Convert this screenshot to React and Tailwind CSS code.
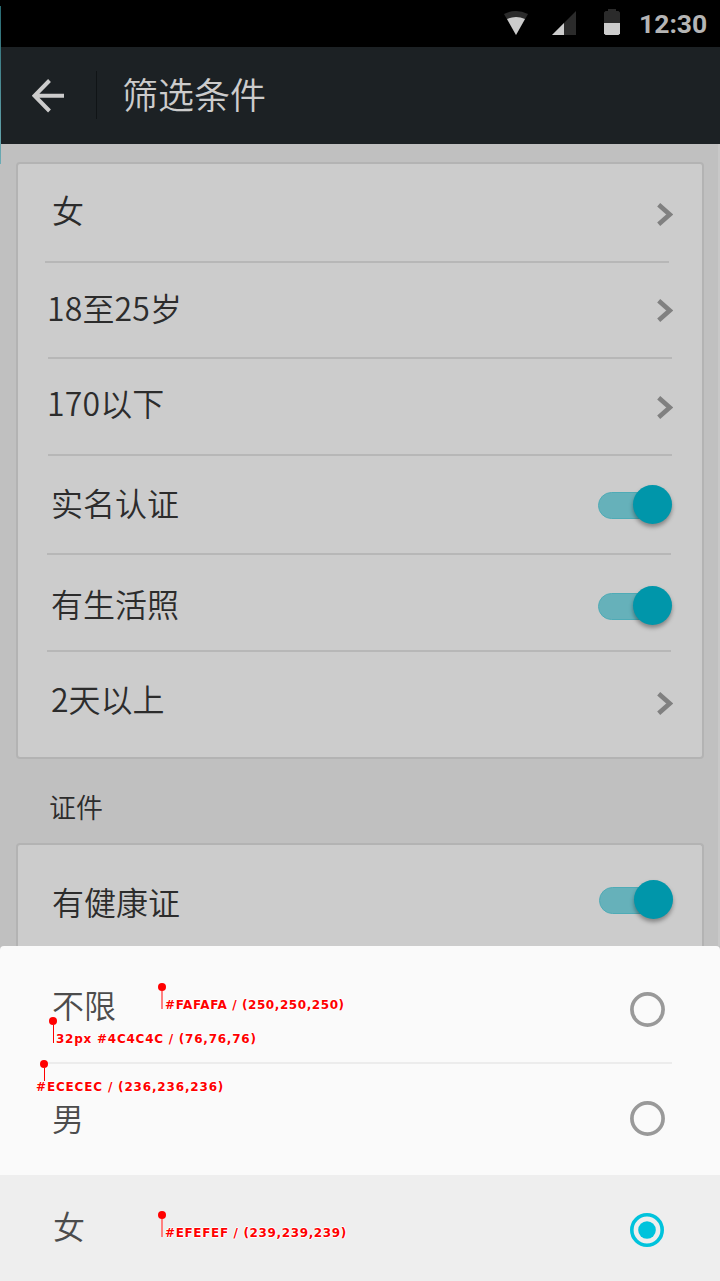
import React from "react";

function Chevron({ className }) {
  return (
    <svg className={`h-[23px] w-4 shrink-0 ${className}`} viewBox="0 0 16 23" fill="none">
      <path d="M1.7 1.7 L12.7 11.5 L1.7 21.3" stroke="#808080" strokeWidth="4.6" />
    </svg>
  );
}

function Toggle({ className }) {
  return (
    <span className={`flex h-[39px] w-[74px] shrink-0 items-center rounded-full ${className}`}>
      <span className="mt-px h-[27px] w-14 rounded-l-full border border-[#4fabb6] bg-[#66b1ba]" />
      <span className="-ml-[21px] size-[39px] shrink-0 rounded-full bg-[#0096aa] shadow-[0_3px_4px_rgba(0,0,0,0.35)]" />
    </span>
  );
}

function Radio({ checked, className }) {
  if (checked) {
    return (
      <svg className={`size-[34px] shrink-0 ${className}`} viewBox="0 0 34 34" fill="none">
        <circle cx="17" cy="17" r="15.2" stroke="#00c3dc" strokeWidth="3.6" />
        <circle cx="17" cy="17" r="8.8" fill="#00c3dc" />
      </svg>
    );
  }
  return (
    <svg className={`size-[35px] shrink-0 ${className}`} viewBox="0 0 35 35" fill="none">
      <circle cx="17.5" cy="17.5" r="15.6" stroke="#999999" strokeWidth="3.7" />
    </svg>
  );
}

const rows = [
  { label: "女", row: "h-[99px]", text: "ml-[34px] mt-[29px]", control: "mt-[39px]", line: "ml-[27px]" },
  { label: "18至25岁", row: "h-24", text: "ml-[29px] mt-[28px] tracking-[0.15px]", control: "mt-9", line: "ml-[30px]" },
  { label: "170以下", row: "h-[97px]", text: "ml-[29px] mt-[27px] tracking-[0.15px]", control: "mt-[37px]", line: "ml-[30px]" },
  { label: "实名认证", row: "h-[99px]", text: "ml-[33px] mt-[30px]", control: "mt-[29px]", line: "ml-[29px]", on: true },
  { label: "有生活照", row: "h-[97px]", text: "ml-[33px] mt-[32px]", control: "mt-[31px]", line: "ml-[29px]", on: true },
  { label: "2天以上", row: "h-[105px]", text: "ml-[33px] mt-[30px]", control: "mt-10" },
];

function Row({ label, row, text, control, line, on }) {
  return (
    <div className={`flex flex-col ${row}`}>
      <div className="flex flex-1 items-start justify-between">
        <span className={`whitespace-nowrap text-[32px] leading-none text-[#2c2c2c] ${text}`}>{label}</span>
        {on ? <Toggle className={`mr-[30px] ${control}`} /> : <Chevron className={`mr-[29px] ${control}`} />}
      </div>
      {line && <div className={`h-0.5 w-[624px] shrink-0 bg-[#b7b7b7] ${line}`} />}
    </div>
  );
}

function Note({ text, className, stem, label }) {
  return (
    <div className={`absolute ${className}`}>
      <div className="flex w-2 flex-col items-center">
        <span className="size-2 shrink-0 rounded-full bg-[#ff0000]" />
        <span className={stem} />
      </div>
      <span
        className={`absolute whitespace-nowrap font-['DejaVu_Sans'] text-[12px] font-bold leading-[14px] text-[#ff0000] [text-shadow:1px_0_white,-1px_0_white,0_1px_white,0_-1px_white] ${label}`}
      >
        {text}
      </span>
    </div>
  );
}

export default function App() {
  return (
    <div className="relative flex h-[1281px] w-[720px] flex-col overflow-hidden bg-[#c0c0c0] font-['Noto_Sans_CJK_SC_DemiLight','Noto_Sans_CJK_SC',sans-serif] font-[350]">
      <div className="flex h-[47px] shrink-0 items-start bg-black">
        <svg className="ml-[504px] mt-[11px] size-6" viewBox="0 0 24 24">
          <path d="M0 3 Q12 -3 24 3 L12 24Z" fill="#2b2b2b" />
          <path d="M3 8 Q12 4 21 8 L12 24Z" fill="#cccccc" />
        </svg>
        <svg className="ml-6 mt-[11px] size-6" viewBox="0 0 24 24">
          <path d="M24 0V24H0Z" fill="#2b2b2b" />
          <path d="M12 12V24H0Z" fill="#cccccc" />
        </svg>
        <svg className="ml-7 mt-[9px] h-[26px] w-4" viewBox="0 0 16 26">
          <path d="M4 0H12V2H14.5L16 3.5V14H0V3.5L1.5 2H4Z" fill="#2b2b2b" />
          <path d="M0 14H16V24.5L14.5 26H1.5L0 24.5Z" fill="#cccccc" />
        </svg>
        <span className="ml-[19px] mt-[9px] whitespace-nowrap font-['Roboto'] text-[26.5px] font-bold leading-[30px] text-[#b5b5b5]">12:30</span>
      </div>

      <header className="flex h-[97px] shrink-0 items-start bg-[#1c2124]">
        <svg className="ml-8 mt-8 h-[34px] w-8" viewBox="0 0 32 34" fill="none">
          <path d="M17.5 1.5 L2.5 16.75 L17.5 32 M2.5 16.75 H32" stroke="#cccccc" strokeWidth="4" />
        </svg>
        <span className="ml-8 mt-6 h-12 w-px bg-[#101416]" />
        <h1 className="ml-[25px] mt-[28px] whitespace-nowrap text-[36px] leading-none text-[#cccccc]">筛选条件</h1>
      </header>

      <main className="flex h-[802px] shrink-0 flex-col overflow-hidden border-r-2 border-[#c8c8c8] pl-4 pt-[18px]">
        <section className="w-[688px] shrink-0 rounded border-2 border-[#b3b3b3] bg-[#cccccc]">
          {rows.map((r) => (
            <Row key={r.label} {...r} />
          ))}
        </section>
        <h2 className="ml-[33px] mt-[34px] h-[50px] shrink-0 text-[27px] leading-none text-[#2c2c2c]">证件</h2>
        <section className="w-[688px] shrink-0 rounded-t border-2 border-b-0 border-[#b3b3b3] bg-[#cccccc]">
          <div className="flex h-[110px] items-start justify-between">
            <span className="ml-[34px] mt-[40px] text-[32px] leading-none text-[#2c2c2c]">有健康证</span>
            <Toggle className="mr-[29px] mt-[35px]" />
          </div>
        </section>
      </main>

      <div className="flex flex-1 flex-col rounded-t-sm bg-[#fafafa] text-[32px] leading-none text-[#4c4c4c]">
        <div className="flex h-[116px] shrink-0 items-start justify-between">
          <span className="ml-[52px] mt-[42px]">不限</span>
          <Radio className="mr-[55px] mt-[46px]" />
        </div>
        <div className="ml-[45px] h-0.5 w-[627px] shrink-0 bg-[#ececec]" />
        <div className="flex h-[111px] shrink-0 items-start justify-between">
          <span className="ml-[52px] mt-[37px]">男</span>
          <Radio className="mr-[55px] mt-[37px]" />
        </div>
        <div className="flex flex-1 items-start justify-between bg-[#eeeeee]">
          <span className="ml-[53px] mt-[34px]">女</span>
          <Radio checked className="mr-14 mt-[38px]" />
        </div>
      </div>

      <div className="absolute left-0 top-1.5 h-[158px] w-px bg-linear-to-b from-[#286a72] to-[#6cacb5]" />

      <Note text="#FAFAFA / (250,250,250)" className="left-[158px] top-[983px]" stem="h-[18px] w-0.5 bg-[#ff8080]" label="left-[7px] top-[15px] tracking-[0.58px]" />
      <Note text="32px #4C4C4C / (76,76,76)" className="left-[49px] top-[1017px]" stem="h-[18px] w-px bg-[#ff0000]" label="left-[7px] top-[15px] tracking-[0.76px]" />
      <Note text="#ECECEC / (236,236,236)" className="left-[40px] top-[1060px]" stem="h-[13px] w-px bg-[#ff0000]" label="-left-[4px] top-[20px] tracking-[0.83px]" />
      <Note text="#EFEFEF / (239,239,239)" className="left-[158px] top-[1211px]" stem="h-[18px] w-0.5 bg-[#ff8080]" label="left-[7px] top-[15px] tracking-[0.64px]" />
    </div>
  );
}
